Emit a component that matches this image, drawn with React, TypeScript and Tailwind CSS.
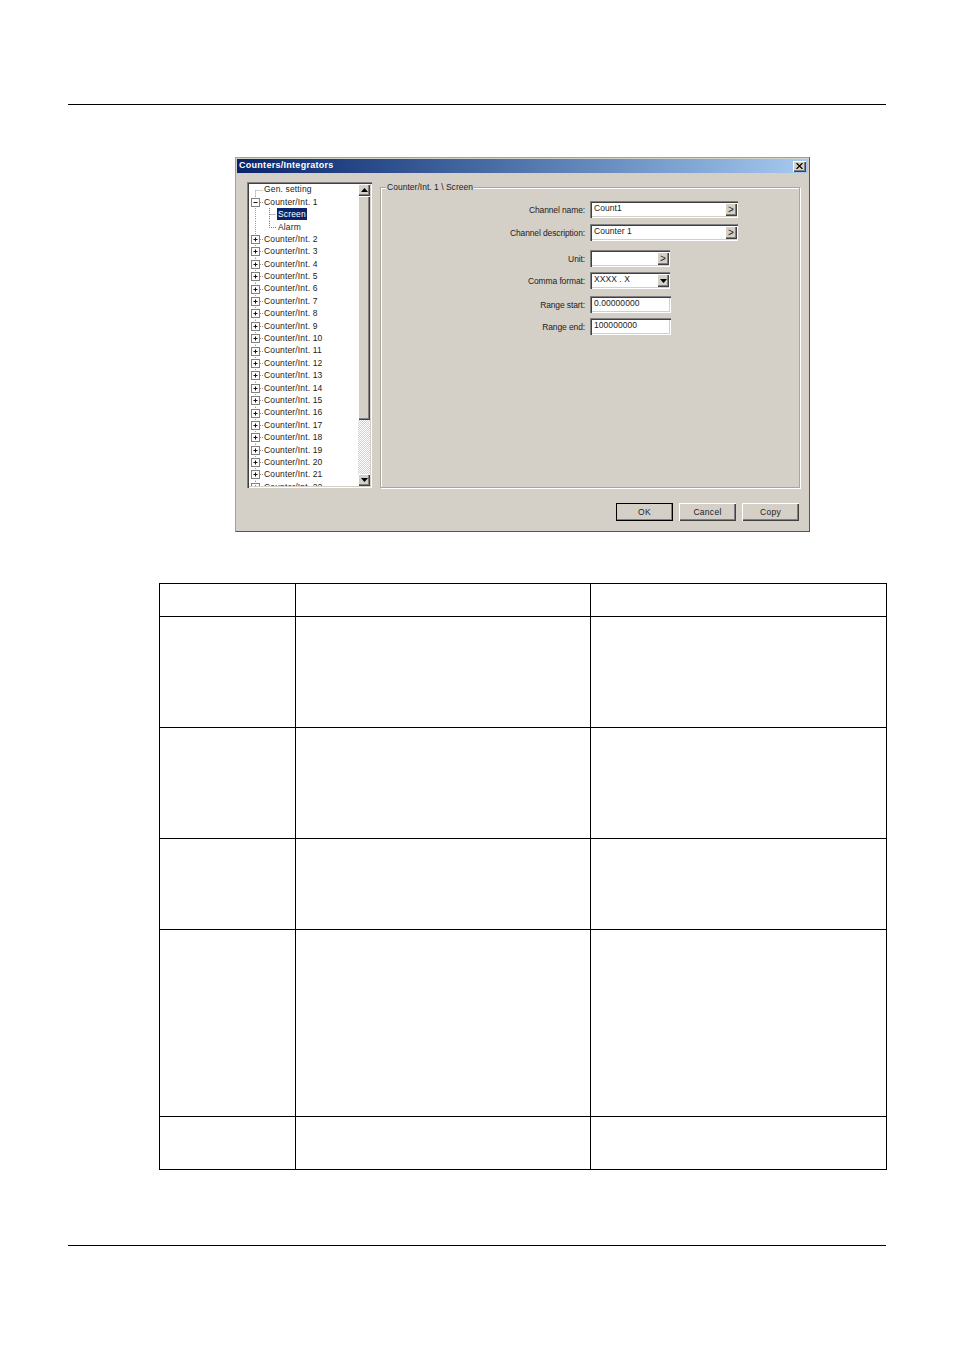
const RAISED =
  "bg-[#d4d0c8] shadow-[inset_1px_1px_0_#ffffff,inset_-1px_-1px_0_#404040,inset_-2px_-2px_0_#808080]";
const SUNKEN =
  "bg-white shadow-[inset_1px_1px_0_#808080,inset_2px_2px_0_#404040,inset_-1px_-1px_0_#ffffff,inset_-2px_-2px_0_#d4d0c8]";

const topItems = Array.from({ length: 21 }, (_, i) => `Counter/Int. ${i + 2}`);

function Expander({ open, hasNext }: { open: boolean; hasNext: boolean }) {
  return (
    <svg width="14" height="12.4" viewBox="0 0 14 12.4" className="shrink-0">
      <path d="M6.5 0V2.2" stroke="#999" strokeDasharray="1 1" fill="none" />
      {hasNext && <path d="M6.5 10V12.4" stroke="#999" strokeDasharray="1 1" fill="none" />}
      <path d="M11 6.5H14" stroke="#999" strokeDasharray="1 1" fill="none" />
      <rect x="2.5" y="2.5" width="8" height="8" fill="#fff" stroke="#808080" />
      <path d="M4.5 6.5H8.5" stroke="#111" fill="none" />
      {!open && <path d="M6.5 4.5V8.5" stroke="#111" fill="none" />}
    </svg>
  );
}

function TreeRow({ label, open = false }: { label: string; open?: boolean }) {
  return (
    <div className="flex h-[12.4px] items-center">
      <Expander open={open} hasNext />
      <span className="ml-px">{label}</span>
    </div>
  );
}

function ChildRow({ label, selected, last }: { label: string; selected?: boolean; last?: boolean }) {
  return (
    <div className="flex h-[12.4px] items-center">
      <svg width="28" height="12.4" viewBox="0 0 28 12.4" className="shrink-0">
        <path d="M6.5 0V12.4" stroke="#999" strokeDasharray="1 1" fill="none" />
        <path d={last ? "M20.5 0V6.5H27" : "M20.5 0V12.4M20.5 6.5H27"} stroke="#777" strokeDasharray="1 1" fill="none" />
      </svg>
      <span className={selected ? "bg-[#0a246a] px-px leading-[12px] text-white" : "px-px"}>{label}</span>
    </div>
  );
}

function Tree() {
  return (
    <div className={`relative h-[306px] w-[125px] shrink-0 overflow-hidden ${SUNKEN}`}>
      <div className="ml-[1px] mt-[1px] h-[303px] w-[111px] overflow-hidden pl-[1px] pt-[0.5px] tracking-[0.15px]">
        <div className="flex h-[12.4px] items-center">
          <svg width="14" height="12.4" viewBox="0 0 14 12.4" className="shrink-0">
            <path d="M6.5 6.5V12.4M6.5 6.5H14" stroke="#999" strokeDasharray="1 1" fill="none" />
          </svg>
          <span className="ml-px">Gen. setting</span>
        </div>
        <TreeRow label="Counter/Int. 1" open />
        <ChildRow label="Screen" selected />
        <ChildRow label="Alarm" last />
        {topItems.map((item) => (
          <TreeRow key={item} label={item} />
        ))}
      </div>
      <div className="absolute top-[2px] right-[2px] bottom-[2px] flex w-[12px] flex-col">
        <ScrollButton up />
        <div className={`h-[224px] shrink-0 ${RAISED}`} />
        <div className="flex-1 bg-[repeating-conic-gradient(#d4d0c8_0_25%,#ffffff_0_50%)] bg-[length:2px_2px]" />
        <ScrollButton />
      </div>
    </div>
  );
}

function ScrollButton({ up }: { up?: boolean }) {
  return (
    <div className={`flex h-[12px] shrink-0 items-center justify-center ${RAISED}`}>
      <svg width="7" height="4" viewBox="0 0 7 4">
        <path d={up ? "M3.5 0L7 4H0Z" : "M0 0H7L3.5 4Z"} fill="#000" />
      </svg>
    </div>
  );
}

function Field({ label, top, width, value, button }: {
  label: string;
  top: string;
  width: string;
  value?: string;
  button?: "more" | "down";
}) {
  return (
    <div className={`flex h-[17px] items-center ${top}`}>
      <div className="w-[209px] shrink-0 pr-[5px] pt-px text-right tracking-[-0.12px]">{label}</div>
      <div className={`flex h-[17px] items-center ${width} ${SUNKEN} pl-[4px] pr-[1px] tracking-[0.06px]`}>
        <span className="flex-1 -translate-y-px overflow-hidden whitespace-nowrap">{value}</span>
        {button === "more" && (
          <span className={`flex h-[13px] w-[12px] items-center justify-center text-[10px] ${RAISED}`}>&gt;</span>
        )}
        {button === "down" && (
          <span className={`flex h-[13px] w-[12px] items-center justify-center ${RAISED}`}>
            <svg width="7" height="4" viewBox="0 0 7 4">
              <path d="M0 0H7L3.5 4Z" fill="#000" />
            </svg>
          </span>
        )}
      </div>
    </div>
  );
}

function DialogButton({ label, primary }: { label: string; primary?: boolean }) {
  return (
    <div
      className={`flex h-[18px] w-[57px] items-center justify-center ${RAISED} ${
        primary ? "outline outline-1 -outline-offset-1 outline-black" : ""
      }`}
    >
      {label}
    </div>
  );
}

function Dialog() {
  return (
    <div className="ml-[235px] mt-[52px] h-[375px] w-[575px] border border-[#a0a0a0] border-r-[#555] border-b-[#555] bg-[#d4d0c8] p-px font-['Liberation_Sans',sans-serif] text-[8.5px] tracking-[0.28px] text-[#222]">
      <div className="flex h-[14px] items-center justify-between bg-gradient-to-r from-[#0a246a] to-[#a6caf0] pl-[2px] pr-[2px]">
        <span className="text-[9px] font-bold text-white">Counters/Integrators</span>
        <div className={`flex h-[11px] w-[13px] items-center justify-center ${RAISED}`}>
          <svg width="7" height="6" viewBox="0 0 7 6">
            <path d="M0.5 0L6.5 6M6.5 0L0.5 6" stroke="#000" strokeWidth="1.2" />
          </svg>
        </div>
      </div>
      <div className="flex pl-[10px] pt-[9px]">
        <Tree />
        <fieldset className="ml-[8px] h-[306px] w-[420px] border border-[#a9a69c] shadow-[inset_1px_1px_0_#ffffff,1px_1px_0_#ffffff]">
          <legend className="ml-[5px] bg-[#d4d0c8] px-px leading-[10px] tracking-[0.02px]">Counter/Int. 1 \ Screen</legend>
          <Field label="Channel name:" top="mt-[9px]" width="w-[148px]" value="Count1" button="more" />
          <Field label="Channel description:" top="mt-[6px]" width="w-[148px]" value="Counter 1" button="more" />
          <Field label="Unit:" top="mt-[9px]" width="w-[80px]" button="more" />
          <Field label="Comma format:" top="mt-[5px]" width="w-[80px]" value="XXXX . X" button="down" />
          <Field label="Range start:" top="mt-[7px]" width="w-[81px]" value="0.00000000" />
          <Field label="Range end:" top="mt-[5px]" width="w-[81px]" value="100000000" />
        </fieldset>
      </div>
      <div className="mt-[15px] flex justify-end gap-[6px] pr-[9px]">
        <DialogButton label="OK" primary />
        <DialogButton label="Cancel" />
        <DialogButton label="Copy" />
      </div>
    </div>
  );
}

const rowHeights = ["h-[33px]", "h-[111px]", "h-[111px]", "h-[91px]", "h-[187px]", "h-[53px]"];

export default function App() {
  return (
    <div className="h-[1350px] w-[954px] overflow-hidden bg-white pt-[104px]">
      <div className="mx-[68px] h-px bg-black" />
      <Dialog />
      <table className="ml-[159px] mt-[51px] w-[727px] table-fixed border-collapse">
        <colgroup>
          <col className="w-[136px]" />
          <col className="w-[295px]" />
          <col className="w-[296px]" />
        </colgroup>
        <tbody>
          {rowHeights.map((height, i) => (
            <tr key={i} className={height}>
              <td className="border border-black" />
              <td className="border border-black" />
              <td className="border border-black" />
            </tr>
          ))}
        </tbody>
      </table>
      <div className="mx-[68px] mt-[75px] h-px bg-black" />
    </div>
  );
}
